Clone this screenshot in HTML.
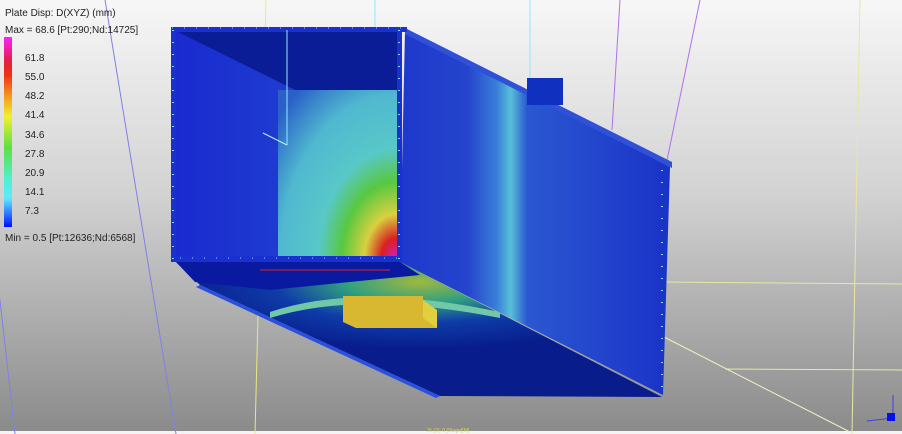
<!DOCTYPE html>
<html><head><meta charset="utf-8"><style>
html,body{margin:0;padding:0;width:902px;height:434px;overflow:hidden;background:#fff}
svg{display:block}
text{font-family:"Liberation Sans",sans-serif}
</style></head><body>
<svg width="902" height="434" viewBox="0 0 902 434" xmlns="http://www.w3.org/2000/svg">
<defs>
<linearGradient id="bg" x1="0" y1="0" x2="0" y2="1">
<stop offset="0" stop-color="#f7f7f7"/><stop offset="0.45" stop-color="#d2d2d2"/><stop offset="1" stop-color="#8a8a8a"/>
</linearGradient>
<linearGradient id="bar" x1="0" y1="0" x2="0" y2="1">
<stop offset="0" stop-color="#ff20ff"/><stop offset="0.12" stop-color="#e0204a"/><stop offset="0.2" stop-color="#f03010"/>
<stop offset="0.32" stop-color="#f4a020"/><stop offset="0.42" stop-color="#f0f030"/><stop offset="0.58" stop-color="#60e040"/>
<stop offset="0.75" stop-color="#50f0d0"/><stop offset="0.85" stop-color="#60e8ff"/><stop offset="1" stop-color="#0010ff"/>
</linearGradient>
<radialGradient id="back" cx="1" cy="1" r="1.3" fx="0.97" fy="1">
<stop offset="0" stop-color="#d020c0"/><stop offset="0.09" stop-color="#d82020"/><stop offset="0.2" stop-color="#d8d040"/>
<stop offset="0.35" stop-color="#58c840"/><stop offset="0.5" stop-color="#58c8c8"/><stop offset="0.75" stop-color="#50b8d0"/><stop offset="1" stop-color="#2a60c8"/>
</radialGradient>
<linearGradient id="lw" x1="0" y1="0" x2="1" y2="0">
<stop offset="0" stop-color="#1a2ad0"/><stop offset="0.5" stop-color="#1e3cd0"/><stop offset="0.8" stop-color="#3a7ad8"/><stop offset="1" stop-color="#2a50c8"/>
</linearGradient>
<linearGradient id="side" x1="0" y1="0" x2="1" y2="0">
<stop offset="0" stop-color="#1e38cc"/><stop offset="0.25" stop-color="#2444cc"/><stop offset="0.36" stop-color="#3a80d8"/><stop offset="0.41" stop-color="#58c0d8"/><stop offset="0.47" stop-color="#2a58d0"/><stop offset="1" stop-color="#1a32c8"/>
</linearGradient>
<radialGradient id="plate" cx="0.5" cy="0.15" r="0.5">
<stop offset="0" stop-color="#a0b840"/><stop offset="0.3" stop-color="#30a080"/><stop offset="0.6" stop-color="#0e3ca8"/><stop offset="1" stop-color="#081c8c"/>
</radialGradient>
</defs>
<rect width="902" height="434" fill="url(#bg)"/>
<rect y="431" width="902" height="3" fill="#f4f4f4"/>
<line x1="105" y1="0" x2="176" y2="434" stroke="#8080e8" stroke-width="1"/>
<line x1="0" y1="300" x2="15" y2="434" stroke="#8080e8" stroke-width="1"/>
<line x1="620" y1="0" x2="612" y2="130" stroke="#b070f0" stroke-width="1"/>
<line x1="700" y1="0" x2="665" y2="170" stroke="#b070f0" stroke-width="1"/>
<line x1="266" y1="0" x2="255" y2="434" stroke="#e8e880" stroke-width="1"/>
<line x1="860" y1="0" x2="852" y2="434" stroke="#e8e8a0" stroke-width="1"/>
<line x1="664" y1="282" x2="902" y2="284" stroke="#e8e8a0" stroke-width="1"/>
<line x1="725" y1="369" x2="902" y2="370" stroke="#e8e8a0" stroke-width="1"/>
<line x1="664" y1="337" x2="852" y2="433" stroke="#f0f0c0" stroke-width="1"/>
<line x1="530" y1="0" x2="530" y2="80" stroke="#90e8ff" stroke-width="1"/>
<line x1="375" y1="0" x2="375" y2="28" stroke="#90e8ff" stroke-width="1"/>
<!-- bottom plate -->
<polygon points="176,262 400,262 662,397 440,396 200,285" fill="url(#plate)"/>
<polygon points="200,285 440,396 436,398 196,287" fill="#2a50e0"/>
<polygon points="176,262 400,262 420,275 270,290 195,282" fill="#0a1aa0"/>
<path d="M270,312 Q360,282 500,312 L500,318 Q360,290 270,318Z" fill="#70c8a8"/>
<!-- side face -->
<polygon points="405,30 670,167 663,395 400,262" fill="url(#side)"/>
<polygon points="405,28 672,162 672,168 405,34" fill="#3050d8"/>
<rect x="527" y="78" width="36" height="27" fill="#1030c0"/>
<!-- front opening -->
<polygon points="175,30 400,30 400,258 175,258" fill="url(#lw)"/>
<polygon points="178,32 400,32 400,90 295,90" fill="#0a1c96"/>
<rect x="278" y="90" width="121" height="168" fill="url(#back)"/>
<!-- frame -->
<rect x="171" y="27" width="236" height="5" fill="#1a30d0"/>
<rect x="171" y="27" width="5" height="234" fill="#1a30d0"/>
<rect x="397" y="27" width="5" height="234" fill="#1a30d0"/>
<rect x="171" y="256" width="231" height="6" fill="#1a30d0"/>
<line x1="172" y1="28" x2="405" y2="28" stroke="#80e0ff" stroke-width="1" stroke-dasharray="1,11"/>
<line x1="173" y1="30" x2="173" y2="260" stroke="#80e0ff" stroke-width="2" stroke-dasharray="1,11"/>
<line x1="399" y1="30" x2="399" y2="260" stroke="#80e0ff" stroke-width="2" stroke-dasharray="1,11"/>
<line x1="180" y1="258" x2="398" y2="258" stroke="#80e0ff" stroke-width="1" stroke-dasharray="1,11"/>
<line x1="662" y1="170" x2="662" y2="395" stroke="#80e0ff" stroke-width="2" stroke-dasharray="1,11"/>
<line x1="287" y1="30" x2="287" y2="145" stroke="#90e8ff" stroke-width="1"/>
<line x1="263" y1="133" x2="287" y2="145" stroke="#c0f0ff" stroke-width="1"/>
<line x1="260" y1="270" x2="390" y2="270" stroke="#e02020" stroke-width="1"/>
<!-- yellow block -->
<polygon points="343,296 423,296 423,318 437,318 437,328 356,328 343,322" fill="#d8b830"/>
<polygon points="423,300 437,310 437,328 423,318" fill="#e0d040"/>
<!-- legend -->
<text x="5" y="16" font-size="10" fill="#222">Plate Disp: D(XYZ) (mm)</text>
<text x="5" y="33" font-size="10" fill="#222">Max = 68.6 [Pt:290;Nd:14725]</text>
<rect x="4" y="37" width="8" height="190" fill="url(#bar)"/>
<g font-size="10" fill="#222">
<text x="25" y="61">61.8</text><text x="25" y="80">55.0</text><text x="25" y="99">48.2</text>
<text x="25" y="118">41.4</text><text x="25" y="138">34.6</text><text x="25" y="157">27.8</text>
<text x="25" y="176">20.9</text><text x="25" y="195">14.1</text><text x="25" y="214">7.3</text>
</g>
<text x="5" y="241" font-size="10" fill="#222">Min = 0.5 [Pt:12636;Nd:6568]</text>
<text x="427" y="432" font-size="5" fill="#d8d860">2t: [2]: 0 [Stage][M]</text>
<line x1="893" y1="395" x2="893" y2="416" stroke="#4040e0"/>
<line x1="867" y1="421" x2="893" y2="418" stroke="#4040e0"/>
<rect x="887" y="413" width="8" height="8" fill="#0010f0"/>
</svg>
</body></html>
